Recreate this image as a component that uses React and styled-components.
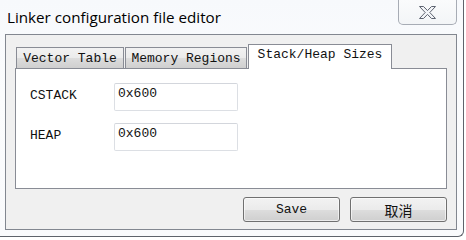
import React from "react";
import styled, { createGlobalStyle } from "styled-components";

const GlobalStyle = createGlobalStyle`
  html, body {
    margin: 0;
    padding: 0;
    background: #ffffff;
  }
`;

const Screen = styled.div`
  width: 466px;
  height: 240px;
  overflow: hidden;
  background: #ffffff;
`;

const Window = styled.div`
  box-sizing: border-box;
  width: 464px;
  height: 237px;
  display: flex;
  flex-direction: column;
  background: linear-gradient(180deg, #f7f9fc 0%, #fbfcfd 40%, #f9fafc 100%);
  border-right: 1px solid #5e636b;
  border-bottom: 1px solid #5e636b;
  border-bottom-right-radius: 6px;
`;

const TitleBar = styled.div`
  height: 34px;
  display: flex;
  align-items: flex-start;
  justify-content: space-between;
  padding-left: 7px;
  padding-right: 6px;
`;

const Title = styled.span`
  margin-top: 7px;
  font-family: "Open Sans", "Noto Sans", sans-serif;
  font-size: 15.2px;
  line-height: 20px;
  color: #000000;
`;

const CloseButton = styled.div`
  box-sizing: border-box;
  width: 59px;
  height: 25px;
  display: flex;
  align-items: center;
  justify-content: center;
  border: 1px solid #a7acb5;
  border-top: none;
  border-bottom-left-radius: 5px;
  border-bottom-right-radius: 5px;
  background: linear-gradient(180deg, #fafbfc 0%, #f3f5f7 100%);
`;

const Client = styled.div`
  box-sizing: border-box;
  height: 196px;
  margin: 0 6px 0 5px;
  padding: 9px 9px 0 9px;
  border: 1px solid #828790;
  background: #f0f0f0;
  display: flex;
  flex-direction: column;
`;

const TabStrip = styled.div`
  display: flex;
  align-items: flex-end;
  height: 24px;
  padding-left: 1px;
`;

const Tab = styled.div`
  box-sizing: border-box;
  position: relative;
  width: ${(p) => p.$width}px;
  height: ${(p) => (p.$active ? 25 : 21)}px;
  margin-left: ${(p) => (p.$active ? 1 : 0)}px;
  margin-bottom: ${(p) => (p.$active ? -1 : 0)}px;
  z-index: ${(p) => (p.$active ? 2 : 1)};
  & + & {
    margin-left: ${(p) => (p.$active ? 1 : -1)}px;
  }
  border: 1px solid #898c95;
  border-bottom: none;
  background: ${(p) =>
    p.$active
      ? "#ffffff"
      : "linear-gradient(180deg, #f2f2f2 0%, #ebebeb 50%, #dddddd 51%, #cfcfcf 100%)"};
  display: flex;
  justify-content: center;
  padding-top: ${(p) => (p.$active ? 3 : 4)}px;
  font-family: "Liberation Mono", "DejaVu Sans Mono", monospace;
  font-size: 13px;
  line-height: 14px;
  color: #111111;
  white-space: nowrap;
`;

const Panel = styled.div`
  box-sizing: border-box;
  height: 121px;
  border: 1px solid #898c95;
  background: #ffffff;
  padding: 14px 0 0 14px;
  display: flex;
  flex-direction: column;
  gap: 12px;
`;

const FieldRow = styled.div`
  display: flex;
  align-items: center;
`;

const Label = styled.span`
  width: 84px;
  margin-top: -3px;
  font-family: "Liberation Mono", "DejaVu Sans Mono", monospace;
  font-size: 13px;
  line-height: 14px;
  color: #111111;
`;

const TextBox = styled.div`
  box-sizing: border-box;
  width: 124px;
  height: ${(p) => p.$height}px;
  padding: 3px 0 0 3px;
  border: 1px solid #dcdfe4;
  border-top-color: #d3d6dc;
  border-radius: 2px;
  background: #ffffff;
  font-family: "Liberation Mono", "DejaVu Sans Mono", monospace;
  font-size: 13px;
  line-height: 14px;
  color: #111111;
`;

const ButtonRow = styled.div`
  display: flex;
  justify-content: flex-end;
  gap: 10px;
  margin-top: 8px;
`;

const Button = styled.div`
  box-sizing: border-box;
  width: 97px;
  height: 25px;
  display: flex;
  align-items: center;
  justify-content: center;
  border: 1px solid #707070;
  border-radius: 3px;
  background: linear-gradient(180deg, #f2f2f2 0%, #ebebeb 50%, #dddddd 51%, #cfcfcf 100%);
  box-shadow: inset 0 0 0 1px rgba(255, 255, 255, 0.6);
  font-family: ${(p) =>
    p.$cjk
      ? '"Noto Sans CJK SC", sans-serif'
      : '"Liberation Mono", "DejaVu Sans Mono", monospace'};
  font-size: ${(p) => (p.$cjk ? 14 : 13)}px;
  line-height: 16px;
  color: #111111;
`;

function CloseGlyph() {
  return (
    <svg width="19" height="15" viewBox="0 0 19 15">
      <path
        d="M1.5 1.5 H5.5 L9.5 5.6 L13.5 1.5 H17.5 L11.8 7.5 L17.5 13.5 H13.5 L9.5 9.4 L5.5 13.5 H1.5 L7.2 7.5 Z"
        fill="#f3f5f8"
        stroke="#5d6370"
        strokeWidth="1"
        strokeLinejoin="round"
      />
    </svg>
  );
}

const tabs = [
  { label: "Vector Table", width: 108 },
  { label: "Memory Regions", width: 122 },
  { label: "Stack/Heap Sizes", width: 144, active: true },
];

const fields = [
  { label: "CSTACK", value: "0x600", height: 28 },
  { label: "HEAP", value: "0x600", height: 28 },
];

export default function App() {
  return (
    <Screen>
      <GlobalStyle />
      <Window>
        <TitleBar>
          <Title>Linker configuration file editor</Title>
          <CloseButton>
            <CloseGlyph />
          </CloseButton>
        </TitleBar>
        <Client>
          <TabStrip>
            {tabs.map((t) => (
              <Tab key={t.label} $width={t.width} $active={t.active}>
                {t.label}
              </Tab>
            ))}
          </TabStrip>
          <Panel>
            {fields.map((f) => (
              <FieldRow key={f.label}>
                <Label>{f.label}</Label>
                <TextBox $height={f.height}>{f.value}</TextBox>
              </FieldRow>
            ))}
          </Panel>
          <ButtonRow>
            <Button>Save</Button>
            <Button $cjk>取消</Button>
          </ButtonRow>
        </Client>
      </Window>
    </Screen>
  );
}
